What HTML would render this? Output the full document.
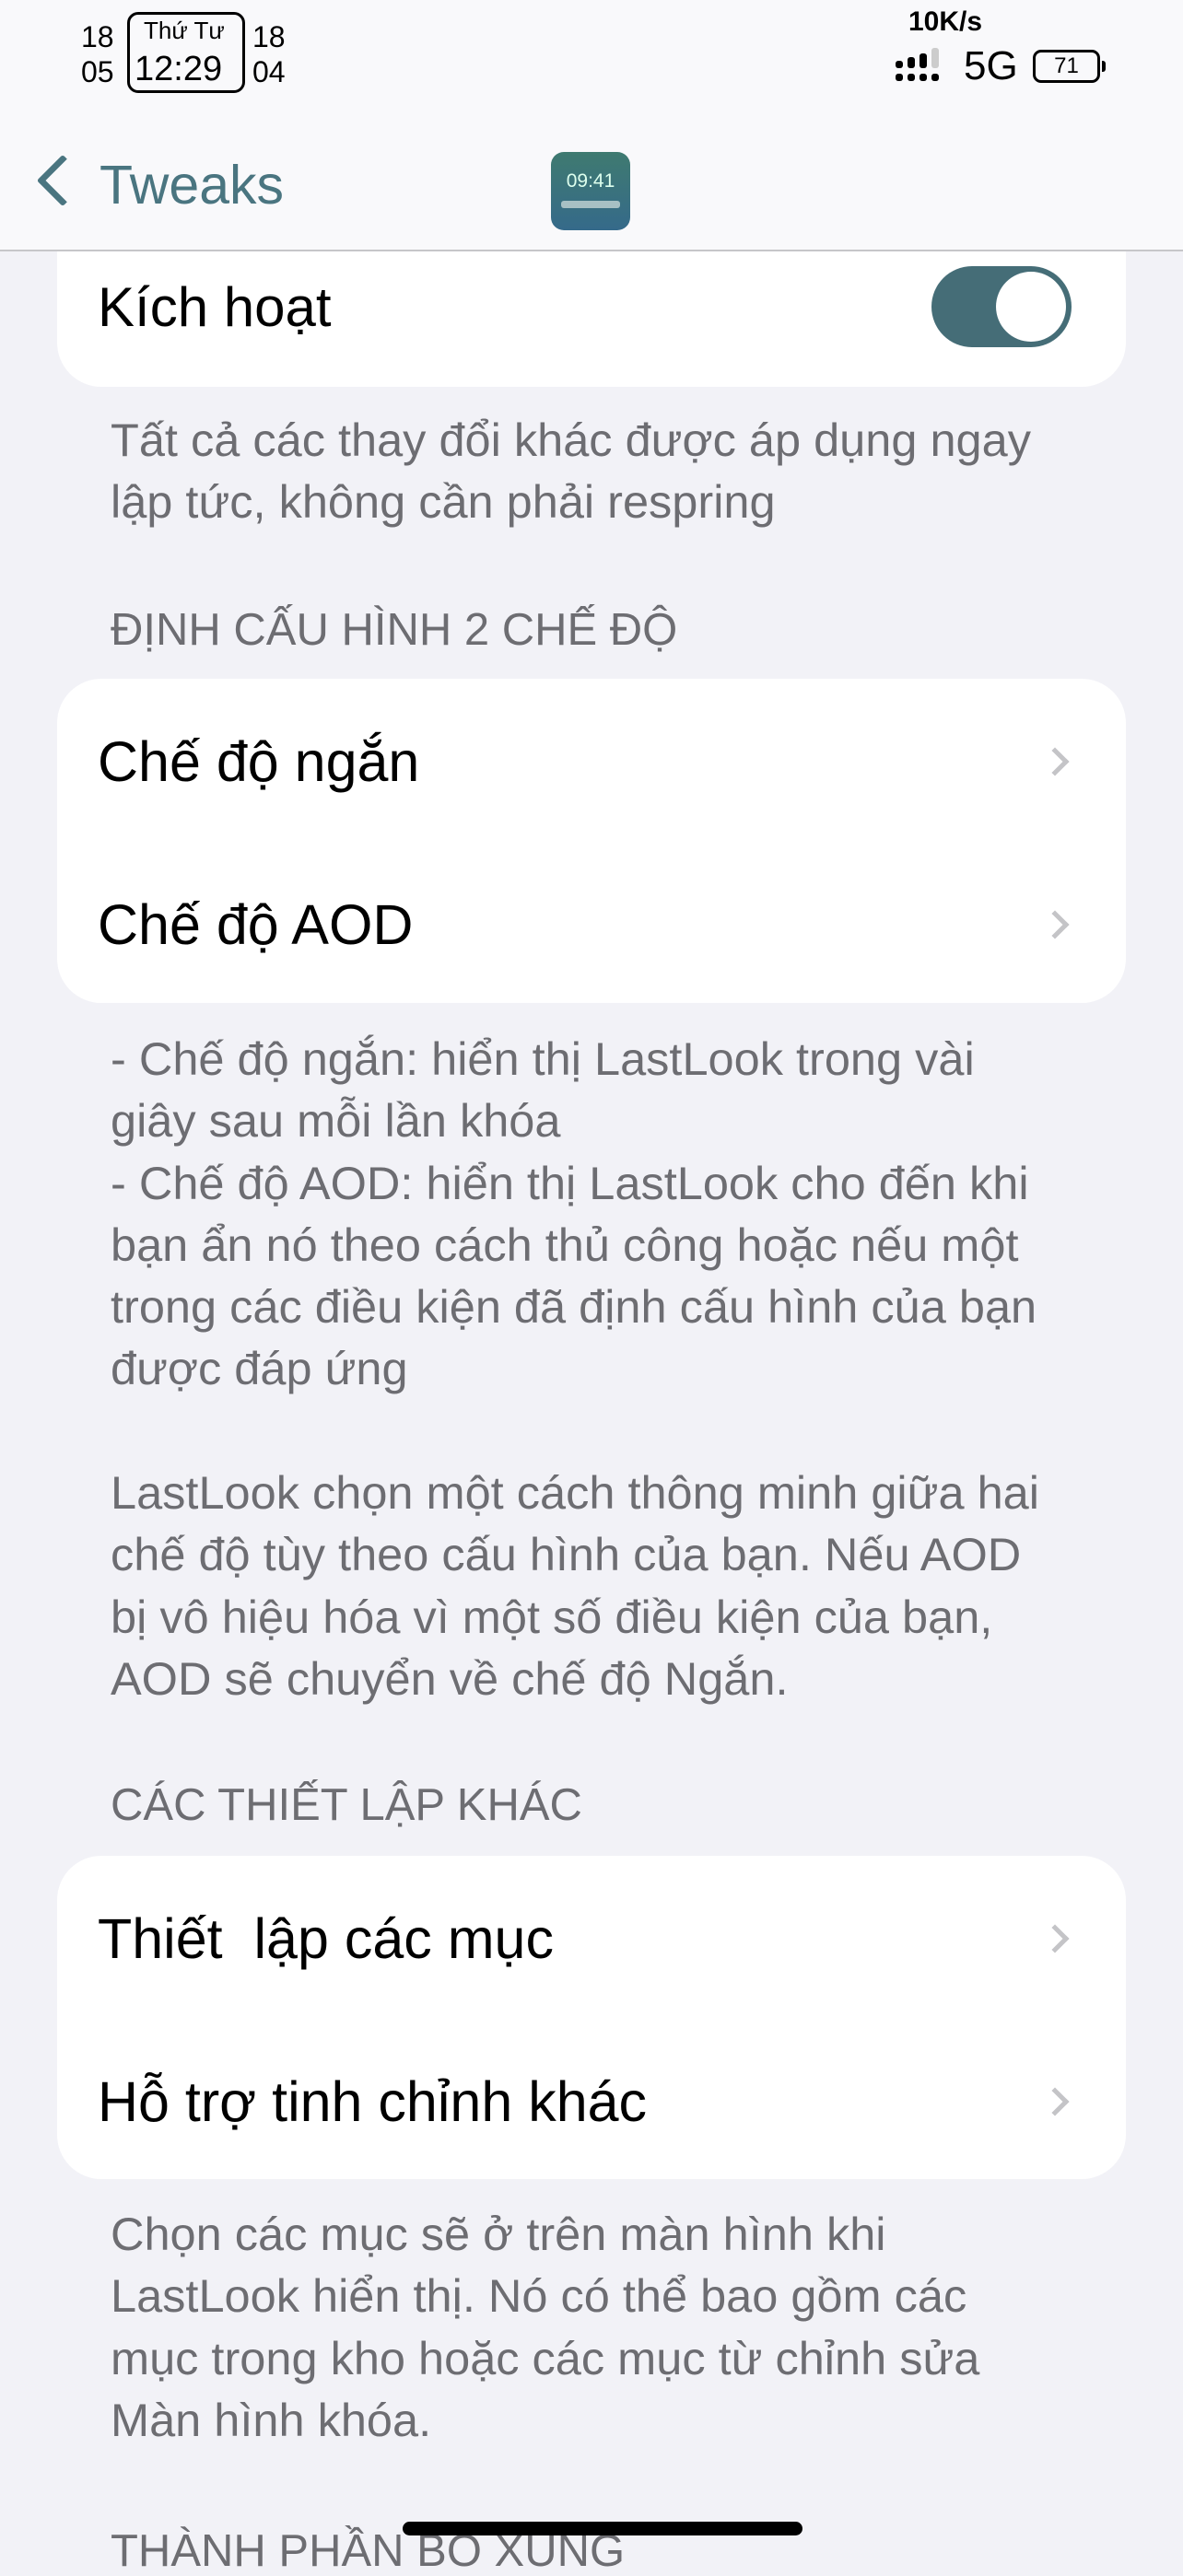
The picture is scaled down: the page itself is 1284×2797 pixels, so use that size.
<!DOCTYPE html>
<html><head><meta charset="utf-8"><style>
*{margin:0;padding:0;box-sizing:border-box}
body{width:1284px;height:2778px;background:#f2f2f7;font-family:"Liberation Sans","Noto Sans CJK SC",sans-serif;position:relative;overflow:hidden}
.a{position:absolute;white-space:nowrap}
.card{position:absolute;left:62px;width:1160px;background:#fff;border-radius:48px}
.lbl{position:absolute;left:44px;font-size:61px;color:#000;line-height:1}
.chev{position:absolute;left:1072px;width:22px;height:22px;border-right:5px solid #c4c4c7;border-top:5px solid #c4c4c7;transform:rotate(45deg)}
.ft{position:absolute;left:120px;font-size:50.5px;color:#6d6d72;line-height:67.3px;white-space:nowrap}
.hd{position:absolute;left:120px;font-size:49px;color:#6d6d72;line-height:1}
</style></head><body>
<div class="card" style="top:200px;height:220px">
 <div class="lbl" style="top:104px;font-size:60px">Kích hoạt</div>
 <div style="position:absolute;left:949px;top:89px;width:152px;height:88px;border-radius:44px;background:#456d77">
  <div style="position:absolute;right:6px;top:6px;width:76px;height:76px;border-radius:50%;background:#fff"></div></div>
</div>
<div class="ft" style="top:444px">Tất cả các thay đổi khác được áp dụng ngay<br>lập tức, không cần phải respring</div>
<div class="hd" style="top:660px">ĐỊNH CẤU HÌNH 2 CHẾ ĐỘ</div>
<div class="card" style="top:737px;height:352px">
 <div class="lbl" style="top:60px">Chế độ ngắn</div><div class="chev" style="top:79px"></div>
 <div class="lbl" style="top:237px">Chế độ AOD</div><div class="chev" style="top:256px"></div>
</div>
<div class="ft" style="top:1116px">- Chế độ ngắn: hiển thị LastLook trong vài<br>giây sau mỗi lần khóa<br>- Chế độ AOD: hiển thị LastLook cho đến khi<br>bạn ẩn nó theo cách thủ công hoặc nếu một<br>trong các điều kiện đã định cấu hình của bạn<br>được đáp ứng<br><br>LastLook chọn một cách thông minh giữa hai<br>chế độ tùy theo cấu hình của bạn. Nếu AOD<br>bị vô hiệu hóa vì một số điều kiện của bạn,<br>AOD sẽ chuyển về chế độ Ngắn.</div>
<div class="hd" style="top:1936px">CÁC THIẾT LẬP KHÁC</div>
<div class="card" style="top:2015px;height:351px">
 <div class="lbl" style="top:60px">Thiết&nbsp; lập các mục</div><div class="chev" style="top:79px"></div>
 <div class="lbl" style="top:237px">Hỗ trợ tinh chỉnh khác</div><div class="chev" style="top:256px"></div>
</div>
<div class="ft" style="top:2392px">Chọn các mục sẽ ở trên màn hình khi<br>LastLook hiển thị. Nó có thể bao gồm các<br>mục trong kho hoặc các mục từ chỉnh sửa<br>Màn hình khóa.</div>
<div class="hd" style="top:2746px">THÀNH PHẦN BỔ XUNG</div>
<div class="a" style="left:437px;top:2738px;width:434px;height:15px;border-radius:8px;background:#000"></div>

<div class="a" style="left:0;top:0;width:1284px;height:273px;background:#f9f9fb;border-bottom:2px solid #c6c6c9"></div>
<div class="a" style="left:88px;top:24px;font-size:32px;line-height:1">18</div>
<div class="a" style="left:88px;top:62px;font-size:32px;line-height:1">05</div>
<div class="a" style="left:138px;top:13px;width:128px;height:88px;border:3px solid #000;border-radius:12px"></div>
<div class="a" style="left:156px;top:20px;font-size:26px;line-height:1">Thứ Tư</div>
<div class="a" style="left:146px;top:56px;font-size:38px;line-height:1">12:29</div>
<div class="a" style="left:274px;top:24px;font-size:32px;line-height:1">18</div>
<div class="a" style="left:274px;top:62px;font-size:32px;line-height:1">04</div>
<div class="a" style="left:986px;top:9px;font-size:30px;line-height:1;font-weight:bold">10K/s</div>
<svg class="a" style="left:972px;top:52px" width="60" height="40"><g fill="#000"><rect x="0" y="14" width="8" height="8" rx="3"/><rect x="0" y="28" width="8" height="8" rx="3"/><rect x="13" y="10" width="8" height="12" rx="3"/><rect x="13" y="28" width="8" height="8" rx="3"/><rect x="26" y="6" width="8" height="16" rx="3"/><rect x="26" y="28" width="8" height="8" rx="3"/><rect x="39" y="28" width="8" height="8" rx="3"/></g><rect x="39" y="0" width="8" height="22" rx="3" fill="#ccc"/></svg>
<div class="a" style="left:1046px;top:50px;font-size:44px;line-height:1">5G</div>
<div class="a" style="left:1121px;top:54px;width:73px;height:36px;border:3px solid #000;border-radius:9px;font-size:24px;text-align:center;line-height:30px">71</div>
<div class="a" style="left:1196px;top:66px;width:4px;height:12px;background:#000;border-radius:0 3px 3px 0"></div>
<div class="a" style="left:48px;top:176px;width:40px;height:40px;border-left:7px solid #4a7580;border-bottom:7px solid #4a7580;transform:rotate(45deg);border-radius:3px"></div>
<div class="a" style="left:108px;top:172px;font-size:59px;line-height:1;color:#4a7580">Tweaks</div>
<div class="a" style="left:598px;top:165px;width:86px;height:85px;border-radius:14px;background:linear-gradient(#3f7a70,#356a8a)">
 <div class="a" style="left:0;width:86px;top:20px;text-align:center;color:#dfe;font-size:21px">09:41</div>
 <div class="a" style="left:11px;top:53px;width:64px;height:8px;border-radius:3px;background:#a8c0c4"></div>
</div>
</body></html>
